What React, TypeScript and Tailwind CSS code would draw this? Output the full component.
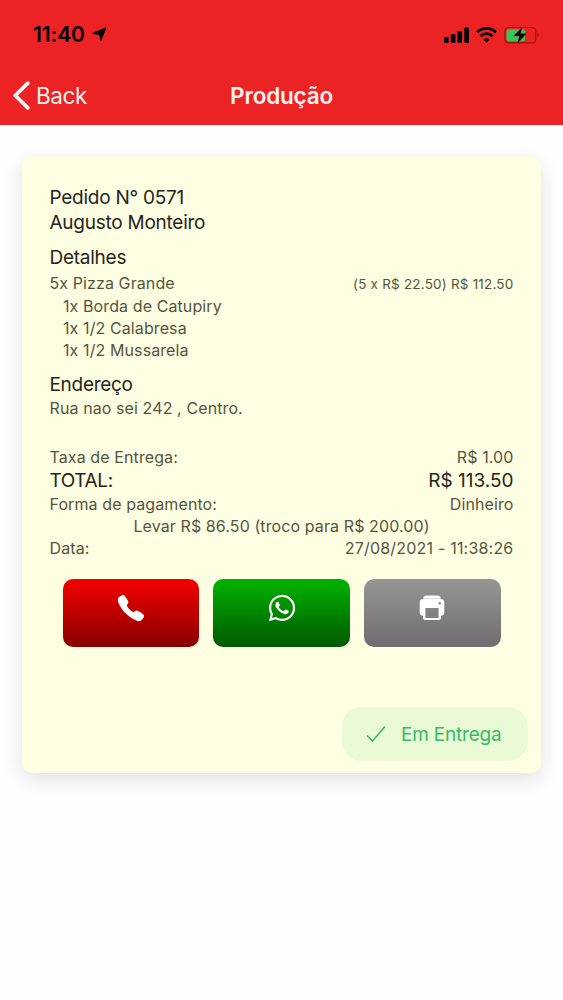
import type { ReactNode } from "react";
import { IoCall, IoLogoWhatsapp } from "react-icons/io5";

const order = {
  number: "0571",
  customer: "Augusto Monteiro",
  extras: ["1x Borda de Catupiry", "1x 1/2 Calabresa", "1x 1/2 Mussarela"],
};

function StatusBar() {
  return (
    <div className="flex h-[69px] items-center justify-between pl-[33px] pr-[24px] text-black">
      <div className="flex items-center gap-[7px]">
        <span className="text-[21px] font-semibold leading-6 tracking-[-0.1px]">11:40</span>
        <svg className="h-[15px] w-[15px]" viewBox="0 0 15 15" fill="currentColor">
          <path d="M14 .8 8.8 13.6 7.7 7.6.6 6.4z" stroke="currentColor" strokeWidth="0.9" strokeLinejoin="round" />
        </svg>
      </div>
      <div className="flex items-center gap-[7px]">
        <svg className="h-[16px] w-[25px]" viewBox="0 0 25 16" fill="currentColor">
          <rect x="0" y="10" width="4.6" height="6" rx="1" />
          <rect x="6.8" y="7" width="4.6" height="9" rx="1" />
          <rect x="13.5" y="4" width="4.6" height="12" rx="1" />
          <rect x="20.3" y="0.5" width="4.6" height="15.5" rx="1" />
        </svg>
        <svg className="h-[16px] w-[21px]" viewBox="0 0 21 16" fill="none" stroke="currentColor" strokeWidth="2.8">
          <path d="M1 5.2a13.4 13.4 0 0 1 19 0" />
          <path d="M4.5 9.2a8.5 8.5 0 0 1 12 0" />
          <path d="M10.5 15.7 7.6 12.6a4.2 4.2 0 0 1 5.8 0z" fill="currentColor" stroke="none" />
        </svg>
        <svg className="h-[18px] w-[35px]" viewBox="0 0 35 18">
          <rect x="0.8" y="1.5" width="31" height="15.4" rx="4" fill="none" stroke="#981412" strokeWidth="1.2" />
          <path d="M33.4 7v4.6c1.6-.6 1.6-4 0-4.6z" fill="#981412" />
          <rect x="2.6" y="3.2" width="18.5" height="12" rx="2" fill="#34c759" />
          <path d="M18.4 1 9.5 10.1h5.9L13.4 17.5l9.2-9.9h-6z" fill="#000" stroke="#eb2325" strokeWidth="0.4" />
        </svg>
      </div>
    </div>
  );
}

function NavBar() {
  return (
    <div className="grid h-[53px] grid-cols-[1fr_auto_1fr] items-center px-[13px] text-[#fff1ef]">
      <div className="flex items-center gap-[5px]">
        <svg className="h-[29px] w-[18px]" viewBox="0 0 18 29" fill="none" stroke="currentColor" strokeWidth="3.8" strokeLinecap="round" strokeLinejoin="round">
          <path d="M14.8 2.2 2.3 14.5l12.5 12.3" />
        </svg>
        <span className="text-[22.5px] leading-7 tracking-[-0.4px]">Back</span>
      </div>
      <h1 className="pt-px text-[22.5px] font-semibold leading-7 tracking-[-0.2px]">Produção</h1>
    </div>
  );
}

function PrinterIcon() {
  return (
    <svg className="h-[26px] w-[26px]" viewBox="0 0 26 26" fill="currentColor">
      <path d="M7.5 .5h11a3.4 3.4 0 0 1 3.2 3.2h-17.4A3.4 3.4 0 0 1 7.5 .5z" />
      <path
        fillRule="evenodd"
        d="M4.3 4.1h17.4a3.6 3.6 0 0 1 3.6 3.6v9.6a3.4 3.4 0 0 1-3.4 3.4v2.4a2 2 0 0 1-2 2H6.1a2 2 0 0 1-2-2v-2.4a3.4 3.4 0 0 1-3.4-3.4V7.7a3.6 3.6 0 0 1 3.6-3.6zM6.4 12.9v10.1h13.2V12.9zM20.8 7a1.3 1.3 0 1 0 0 2.6 1.3 1.3 0 0 0 0-2.6z"
      />
    </svg>
  );
}

function Row({ label, children }: { label: string; children: ReactNode }) {
  return (
    <div className="flex h-[22px] items-center justify-between">
      <span>{label}</span>
      <span>{children}</span>
    </div>
  );
}

export default function App() {
  return (
    <div className="min-h-[1000px] bg-[#fefefe] font-['Inter',sans-serif] [font-feature-settings:'calt'_0]">
      <header className="h-[125px] bg-[#eb2325]">
        <StatusBar />
        <NavBar />
      </header>

      <main className="mx-[22px] mt-[31px] flex h-[617px] flex-col rounded-[10px] bg-[#fefee2] px-[27.5px] pt-[30px] text-[16px] tracking-[0.1px] text-[#55553f] shadow-[0_7px_20px_rgba(40,30,60,0.13)]">
        <section className="text-[19px] leading-[24.5px] tracking-[-0.25px] text-[#25251c]">
          <p>Pedido N° {order.number}</p>
          <p>{order.customer}</p>
        </section>

        <section className="mt-[11px] leading-[22px]">
          <h2 className="mb-[2px] text-[19px] leading-6 tracking-[-0.25px] text-[#25251c]">Detalhes</h2>
          <Row label="5x Pizza Grande">
            <span className="text-[13.5px] tracking-[0.2px]">(5 x R$ 22.50) R$ 112.50</span>
          </Row>
          <ul className="mt-px pl-[13.5px]">
            {order.extras.map((extra) => (
              <li key={extra}>{extra}</li>
            ))}
          </ul>
        </section>

        <section className="mt-[12px] leading-[22px]">
          <h2 className="text-[19px] leading-6 tracking-[-0.3px] text-[#25251c]">Endereço</h2>
          <p>Rua nao sei 242 , Centro.</p>
        </section>

        <section className="mt-[27px] leading-[22px]">
          <Row label="Taxa de Entrega:">R$ 1.00</Row>
          <div className="flex h-[25px] items-center justify-between text-[19px] text-[#25251c]">
            <span className="tracking-[-0.4px]">TOTAL:</span>
            <span className="tracking-normal">R$ 113.50</span>
          </div>
          <Row label="Forma de pagamento:">Dinheiro</Row>
          <p className="text-center">Levar R$ 86.50 (troco para R$ 200.00)</p>
          <Row label="Data:">
            <span className="tracking-[0.2px]">27/08/2021 - 11:38:26</span>
          </Row>
        </section>

        <div className="mt-[20px] flex h-[68px] gap-[14px] px-[13px] text-white">
          <button className="flex flex-1 justify-center rounded-[10px] bg-linear-to-b from-[#f60000] to-[#870000] pt-[14px]">
            <IoCall size={30} />
          </button>
          <button className="flex flex-1 justify-center rounded-[10px] bg-linear-to-b from-[#00b400] to-[#005a00] pt-[14px]">
            <IoLogoWhatsapp size={30} />
          </button>
          <button className="flex flex-1 justify-center rounded-[10px] bg-linear-to-b from-[#969696] to-[#706c70] pt-[15.5px]">
            <PrinterIcon />
          </button>
        </div>

        <div className="-mr-[14.5px] mt-auto mb-[12px] flex h-[54px] w-[186px] items-center gap-[15px] self-end rounded-[20px] bg-[#eafad6] pl-[24px] text-[#36bb68]">
          <svg className="h-[18px] w-[20px]" viewBox="0 0 20 18" fill="none" stroke="currentColor" strokeWidth="1.6">
            <path d="M1 10.5 6.5 16 19 1.5" />
          </svg>
          <span className="pt-[2px] text-[19px] tracking-[-0.2px]">Em Entrega</span>
        </div>
      </main>
    </div>
  );
}
